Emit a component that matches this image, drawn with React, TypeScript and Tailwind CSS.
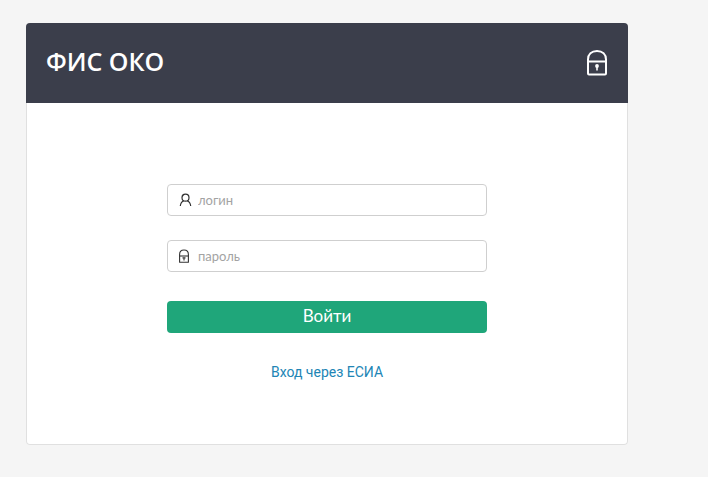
import React from 'react';

type IconProps = { className?: string };

function HeaderLock({ className }: IconProps) {
  return (
    <svg className={className} viewBox="0 0 22 28" fill="none" stroke="currentColor" strokeWidth="2" aria-hidden="true">
      <path d="M2 12.5V10.5C2 5.2 5.6 2 11 2s9 3.200 9 8.500v14a1 1 0 0 1-1 1H3a1 1 0 0 1-1-1v-12z" strokeLinejoin="round" />
      <path d="M2 12.500h18" />
      <circle cx="11" cy="17" r="1.900" fill="currentColor" stroke="none" />
      <path d="M11 17v4.500" strokeWidth="1.600" />
    </svg>
  );
}

function UserIcon({ className }: IconProps) {
  return (
    <svg className={className} viewBox="0 0 13 14" fill="none" stroke="currentColor" strokeWidth="1.200" aria-hidden="true">
      <circle cx="6.500" cy="4.700" r="3.500" />
      <path d="M1.300 13C1.600 10.200 2.800 8.500 4.900 7.800M11.700 13C11.400 10.200 10.200 8.500 8.100 7.800" />
    </svg>
  );
}

function SmallLock({ className }: IconProps) {
  return (
    <svg className={className} viewBox="0 0 13 14" fill="none" stroke="currentColor" strokeWidth="1.100" aria-hidden="true">
      <path d="M0.600 7V5.500C0.600 2.800 2.300 1 5 1s4.400 1.800 4.400 4.500v7.700h-8.800z" strokeLinejoin="round" />
      <path d="M0.600 7h8.800" />
      <path d="M3.500 8.900h3M5 8.900v2.500" />
    </svg>
  );
}

type FieldProps = {
  id: string;
  label: string;
  type: string;
  icon: React.ReactNode;
};

function Field({ id, label, type, icon }: FieldProps) {
  return (
    <div className="flex h-8 items-center rounded border border-[#cfcfcf] bg-white pb-px pl-[11px] focus-within:border-[#1fa67a]">
      <label htmlFor={id} aria-label={label} className="w-[19px] shrink-0 text-[#333333]">
        {icon}
      </label>
      <input
        id={id}
        type={type}
        placeholder={label}
        className="min-w-0 flex-1 bg-transparent font-[Lato,sans-serif] text-[13px] leading-5 text-[#333333] outline-none placeholder:text-[#a3a3a3]"
      />
    </div>
  );
}

export default function App() {
  return (
    <main className="min-h-screen bg-[#f5f5f5] py-[23px] pr-20 pl-[26px]">
      <section className="overflow-hidden rounded bg-white shadow-[inset_0_0_0_1px_#e0e0e0]">
        <header className="flex h-20 items-center justify-between bg-[#3b3e4b] px-5 text-white">
          <h1 className="pb-1 font-['Open_Sans',sans-serif] text-[25px] leading-8 font-semibold">ФИС ОКО</h1>
          <HeaderLock className="h-7 w-[22px]" />
        </header>
        <form className="mx-auto w-80 pt-[81px] pb-[63px]" onSubmit={(event) => event.preventDefault()}>
          <div className="flex flex-col gap-6">
            <Field id="login" label="логин" type="text" icon={<UserIcon className="h-3.5 w-[13px]" />} />
            <Field id="password" label="пароль" type="password" icon={<SmallLock className="h-3.5 w-[13px]" />} />
          </div>
          <button
            type="submit"
            className="mt-[29px] h-8 w-full rounded bg-[#1fa67a] pb-0.5 font-[Lato,sans-serif] text-[17px] leading-6 text-white"
          >
            Войти
          </button>
          <a
            href="#esia"
            className="mx-auto mt-[29px] block w-fit font-[Roboto,sans-serif] text-sm leading-5 text-[#2185b5]"
          >
            Вход через ЕСИА
          </a>
        </form>
      </section>
    </main>
  );
}
